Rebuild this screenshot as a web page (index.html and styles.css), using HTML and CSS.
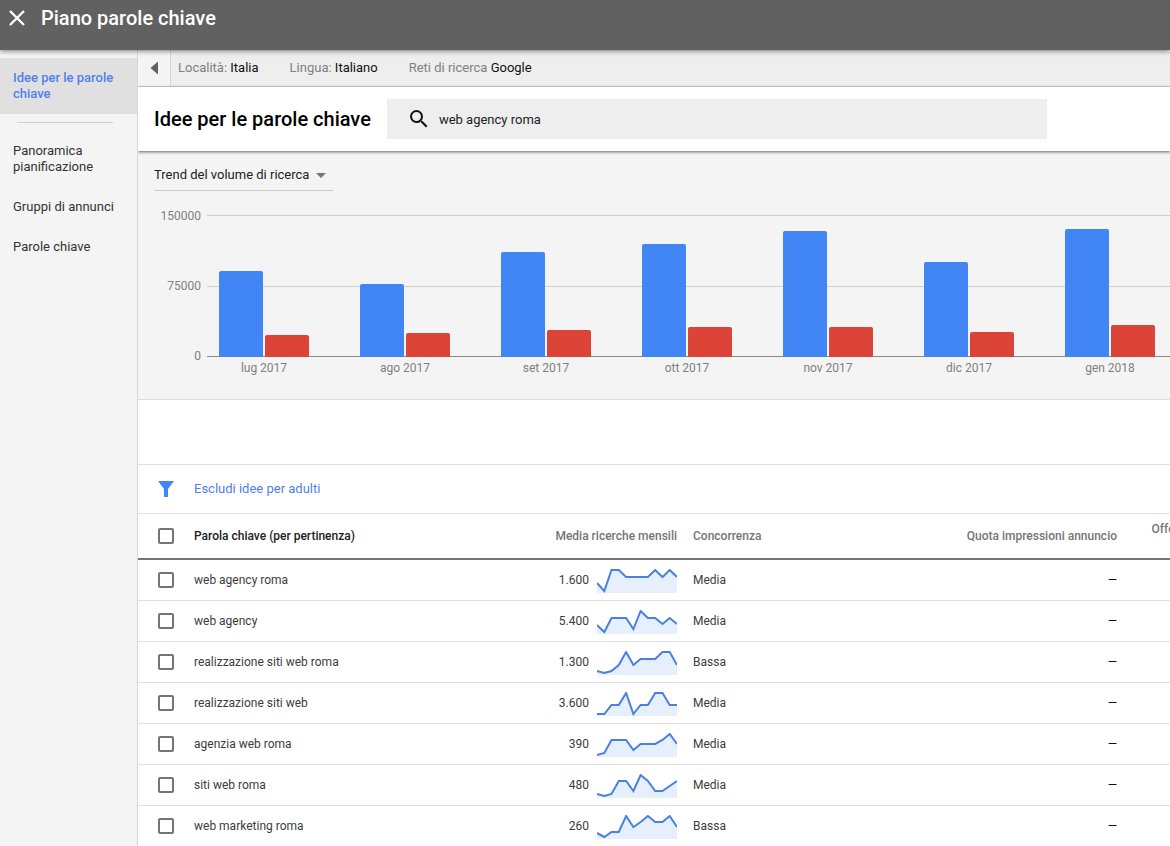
FILE: index.html
```html
<!DOCTYPE html>
<html lang="it">
<head>
    <meta charset="UTF-8">
    <meta name="viewport" content="width=device-width, initial-scale=1.0">
    <title>Piano parole chiave</title>
    <link rel="stylesheet" href="styles.css">
</head>
<body>
    <header class="topbar">
        <button class="iconButton" aria-label="Chiudi">
            <svg width="24" height="24" viewBox="0 0 24 24"><path d="M5 5L19 19M19 5L5 19" fill="none" stroke="#fff" stroke-width="2.4"/></svg>
        </button>
        <h1>Piano parole chiave</h1>
    </header>

    <div class="layout">
        <nav class="sidebar">
            <a class="active" href="#">Idee per le parole chiave</a>
            <hr>
            <a href="#">Panoramica pianificazione</a>
            <a href="#">Gruppi di annunci</a>
            <a href="#">Parole chiave</a>
        </nav>

        <main class="content">
            <div class="settings">
                <button class="collapse" aria-label="Comprimi">
                    <svg width="8" height="14" viewBox="0 0 8 14"><path d="M8 0.5V13.5L0.5 7z" fill="#616161"/></svg>
                </button>
                <span class="setting">Località: <b>Italia</b></span>
                <span class="setting">Lingua: <b>Italiano</b></span>
                <span class="setting">Reti di ricerca <b>Google</b></span>
            </div>

            <div class="titleBar">
                <h2>Idee per le parole chiave</h2>
                <label class="search">
                    <svg width="24" height="24" viewBox="0 0 24 24"><path fill="#111" d="M15.5 14h-.79l-.28-.27A6.47 6.47 0 0 0 16 9.5 6.5 6.5 0 1 0 9.5 16c1.61 0 3.09-.59 4.23-1.57l.27.28v.79l5 4.99L20.49 19l-4.99-5zm-6 0C7.01 14 5 11.99 5 9.5S7.01 5 9.5 5 14 7.01 14 9.5 11.99 14 9.5 14z"/></svg>
                    <input type="text" value="web agency roma" aria-label="Cerca parole chiave">
                </label>
            </div>

            <section class="trend">
                <div class="trendSelect">
                    <select aria-label="Tipo di grafico">
                        <option>Trend del volume di ricerca</option>
                    </select>
                </div>
                <div class="chart">
                    <div class="axis">
                        <span>150000</span>
                        <span>75000</span>
                        <span>0</span>
                    </div>
                    <div class="plot" id="plot"></div>
                </div>
            </section>

            <div class="toolbar"></div>

            <div class="filter">
                <svg width="16" height="16" viewBox="0 0 16 16"><path d="M0 0H16L10 8V16H6V8z" fill="#4285f4"/></svg>
                <a href="#">Escludi idee per adulti</a>
            </div>

            <table class="keywords">
                <colgroup>
                    <col class="colCheck">
                    <col class="colKeyword">
                    <col class="colVolume">
                    <col>
                    <col class="colQuota">
                    <col class="colBid">
                </colgroup>
                <thead>
                    <tr>
                        <th><input type="checkbox" aria-label="Seleziona tutto"></th>
                        <th class="sorted">Parola chiave (per pertinenza)</th>
                        <th class="num">Media ricerche mensili</th>
                        <th>Concorrenza</th>
                        <th class="num">Quota impressioni annuncio</th>
                        <th class="num">Offerta per<br>&nbsp;</th>
                    </tr>
                </thead>
                <tbody id="rows"></tbody>
            </table>
        </main>
    </div>

    <script>
        const max = 150000;

        const months = [
            { name: 'lug 2017', total: 91200, mobile: 23300 },
            { name: 'ago 2017', total: 77400, mobile: 25400 },
            { name: 'set 2017', total: 111300, mobile: 28600 },
            { name: 'ott 2017', total: 119800, mobile: 31800 },
            { name: 'nov 2017', total: 133600, mobile: 31800 },
            { name: 'dic 2017', total: 100700, mobile: 26500 },
            { name: 'gen 2018', total: 135700, mobile: 33900 }
        ];

        // trend: y of each month in the 80x24 sparkline
        const keywords = [
            { name: 'web agency roma', volume: '1.600', level: 'Media', trend: [14, 22, 1, 1, 8, 8, 8, 8, 1, 8, 1, 8] },
            { name: 'web agency', volume: '5.400', level: 'Media', trend: [15, 22, 8, 8, 8, 19, 1, 8, 8, 14, 8, 14] },
            { name: 'realizzazione siti web roma', volume: '1.300', level: 'Bassa', trend: [20, 22, 20, 14, 1, 14, 8, 8, 8, 1, 1, 14] },
            { name: 'realizzazione siti web', volume: '3.600', level: 'Media', trend: [22, 22, 13, 13, 1, 22, 13, 13, 1, 1, 13, 13] },
            { name: 'agenzia web roma', volume: '390', level: 'Media', trend: [22, 20, 7, 7, 7, 17, 11, 11, 11, 7, 1, 11] },
            { name: 'siti web roma', volume: '480', level: 'Media', trend: [20, 22, 20, 7, 7, 17, 1, 7, 17, 17, 12, 7] },
            { name: 'web marketing roma', volume: '260', level: 'Bassa', trend: [18, 22, 17, 17, 1, 12, 7, 1, 7, 7, 1, 12] }
        ];

        function sparkline(trend) {
            const step = 80 / (trend.length - 1);
            const points = trend.map((y, i) => `${(i * step).toFixed(1)},${y}`).join(' ');
            return `<svg class="spark" width="80" height="24" viewBox="0 0 80 24">
                <polygon points="0,24 ${points} 80,24" fill="#e6effc"/>
                <polyline points="${points}" fill="none" stroke="#4a80e0" stroke-width="2"/>
            </svg>`;
        }

        document.getElementById('plot').innerHTML = months.map(m => `
            <div class="month">
                <div class="bars">
                    <div class="bar total" style="height: ${m.total / max * 100}%"></div>
                    <div class="bar mobile" style="height: ${m.mobile / max * 100}%"></div>
                </div>
                <span>${m.name}</span>
            </div>`).join('');

        document.getElementById('rows').innerHTML = keywords.map(k => `
            <tr>
                <td><input type="checkbox" aria-label="${k.name}"></td>
                <td>${k.name}</td>
                <td><div class="volume">${k.volume}${sparkline(k.trend)}</div></td>
                <td>${k.level}</td>
                <td class="num">—</td>
                <td></td>
            </tr>`).join('');
    </script>
</body>
</html>
```
FILE: styles.css
```css
* {
    box-sizing: border-box;
}
body {
    margin: 0;
    height: 100vh;
    display: flex;
    flex-direction: column;
    overflow: hidden;
    font-family: Roboto, Arial, sans-serif;
    font-size: 13px;
    line-height: 16px;
    color: #3c3c3c;
    background-color: #fff;
}
a {
    color: inherit;
    text-decoration: none;
}
button {
    border: none;
    background: none;
    padding: 0;
    cursor: pointer;
}
svg {
    display: block;
    flex: none;
}

/* Header */
.topbar {
    position: relative;
    z-index: 1;
    flex: none;
    display: flex;
    align-items: center;
    gap: 12px;
    height: 50px;
    padding: 0 5px 14px;
    background-color: #616161;
    box-shadow: 0 1px 5px rgba(0, 0, 0, 0.5);
}
.topbar h1 {
    margin: 0;
    font-size: 20px;
    font-weight: 500;
    line-height: 24px;
    color: #fff;
}

.layout {
    flex: 1;
    display: flex;
    min-height: 0;
}

/* Sidebar */
.sidebar {
    flex: none;
    width: 138px;
    padding-top: 8px;
    background-color: #f4f4f4;
    border-right: 1px solid #d6d6d6;
}
.sidebar a {
    display: block;
    padding: 12px 20px 12px 13px;
    color: #333;
}
.sidebar .active {
    background-color: #e0e0e0;
    color: #5080f0;
    font-weight: 500;
}
.sidebar hr {
    height: 1px;
    margin: 8px 24px 8px 17px;
    border: none;
    background-color: #d0d0d0;
}

.content {
    flex: 1;
    min-width: 0;
    overflow: hidden;
}
.settings {
    display: flex;
    align-items: center;
    gap: 31px;
    height: 37px;
    background-color: #eee;
    border-bottom: 1px solid #d0d0d0;
    color: #808080;
}
.settings b {
    font-weight: 400;
    color: #111;
}
.collapse {
    display: flex;
    align-items: center;
    justify-content: center;
    align-self: stretch;
    width: 33px;
    margin-right: -24px;
    background-color: #f4f4f4;
    border-right: 1px solid #d6d6d6;
}

.titleBar {
    position: relative;
    display: flex;
    align-items: center;
    gap: 16px;
    height: 64px;
    padding: 0 16px;
    background-color: #fff;
    box-shadow: 0 1px 3px rgba(0, 0, 0, 0.6);
}
.titleBar h2 {
    margin: 0;
    font-size: 20px;
    font-weight: 500;
    line-height: 24px;
    color: #000;
    white-space: nowrap;
}
.search {
    flex: 1;
    display: flex;
    align-items: center;
    gap: 8px;
    max-width: 660px;
    height: 40px;
    padding: 0 20px;
    background-color: #eee;
}
.search input {
    flex: 1;
    padding: 2px 0 0;
    border: none;
    outline: none;
    background: none;
    font: inherit;
    color: #222;
}

/* Chart */
.trend {
    height: 249px;
    padding: 8px 0 0 16px;
    background-color: #f4f4f4;
    border-bottom: 1px solid #dedede;
}
.trendSelect {
    position: relative;
    width: 179px;
}
.trendSelect select {
    display: block;
    appearance: none;
    width: 100%;
    height: 32px;
    padding: 0;
    border: none;
    border-bottom: 1px solid #ccc;
    border-radius: 0;
    background: none;
    font: inherit;
    color: #222;
}
.trendSelect::after {
    content: "";
    position: absolute;
    top: 14px;
    right: 7px;
    border: 5px solid transparent;
    border-top-color: #757575;
    border-bottom: none;
    pointer-events: none;
}
.chart {
    display: flex;
    gap: 6px;
    margin-top: 24px;
}
.axis {
    flex: none;
    display: flex;
    flex-direction: column;
    justify-content: space-between;
    width: 47px;
    height: 156px;
    margin-top: -7px;
    font-size: 12px;
    text-align: right;
    color: #808080;
}
.plot {
    flex: 1;
    min-width: 0;
    display: flex;
    gap: 51px;
    padding-left: 12px;
    overflow: hidden;
    background: linear-gradient(#d0d0d0, #d0d0d0) 0 0 / 100% 1px no-repeat,
        linear-gradient(#d0d0d0, #d0d0d0) 0 71px / 100% 1px no-repeat,
        linear-gradient(#8a8a8a, #8a8a8a) 0 141px / 100% 1px no-repeat;
}
.month {
    flex: none;
    width: 90px;
    font-size: 12px;
    text-align: center;
    color: #808080;
}
.bars {
    display: flex;
    align-items: flex-end;
    gap: 2px;
    height: 142px;
    margin-bottom: 3px;
}
.bar {
    flex: 1;
    border-radius: 2px 2px 0 0;
}
.total {
    background-color: #4285f4;
}
.mobile {
    background-color: #db4437;
}

/* Keyword table */
.toolbar {
    height: 64px;
}
.filter {
    display: flex;
    align-items: center;
    gap: 20px;
    height: 50px;
    padding-left: 20px;
    border-top: 1px solid #e0e0e0;
    border-bottom: 1px solid #e0e0e0;
    color: #5080f0;
}
.keywords {
    width: 100%;
    min-width: 1080px;
    table-layout: fixed;
    border-collapse: separate;
    border-spacing: 0;
    font-size: 12px;
}
.colCheck {
    width: 48px;
}
.colKeyword {
    width: 221px;
}
.colVolume {
    width: 278px;
}
.colQuota {
    width: 200px;
}
.colBid {
    width: 93px;
}
.keywords th,
.keywords td {
    height: 41px;
    padding: 0 8px;
    border-bottom: 1px solid #e0e0e0;
    text-align: left;
    white-space: nowrap;
}
.keywords th {
    height: 46px;
    border-bottom: 2px solid #757575;
    font-weight: 500;
    line-height: 14px;
    color: #757575;
}
.keywords .sorted {
    color: #222;
}
.keywords .num {
    text-align: right;
}
.keywords td.num {
    color: #111;
}
.keywords th:first-child,
.keywords td:first-child {
    padding-left: 20px;
}
.volume {
    display: flex;
    align-items: center;
    justify-content: flex-end;
    gap: 8px;
}
.spark {
    margin-top: 2px;
}
input[type="checkbox"] {
    display: block;
    appearance: none;
    width: 16px;
    height: 16px;
    margin: 0;
    border: 2px solid #757575;
    border-radius: 2px;
}
```
